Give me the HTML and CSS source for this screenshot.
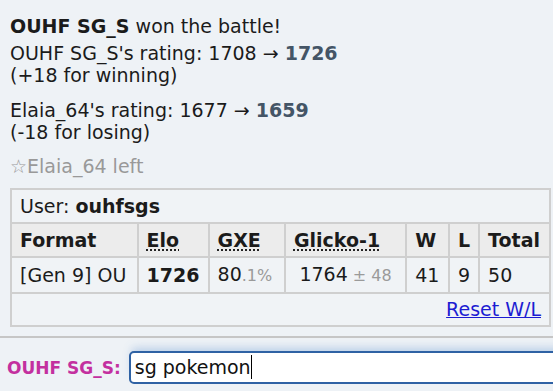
FILE: index.html
```html
<!DOCTYPE html>
<html lang="en">
<head>
  <meta charset="UTF-8">
  <meta name="viewport" content="width=device-width, initial-scale=1.0">
  <title>Battle log</title>
  <link rel="stylesheet" href="styles.css">
</head>
<body>
  <div class="log">
    <div class="win"><strong>OUHF SG_S</strong> won the battle!</div>
    <p class="rating">OUHF SG_S's rating: 1708 &rarr; <strong>1726</strong><br>(+18 for winning)</p>
    <p class="rating">Elaia_64's rating: 1677 &rarr; <strong>1659</strong><br>(-18 for losing)</p>
    <div class="notice">&#9734;Elaia_64 left</div>

    <table class="ladder">
      <tr>
        <td colspan="7" class="user">User: <strong>ouhfsgs</strong></td>
      </tr>
      <tr>
        <th class="col-format">Format</th>
        <th class="col-elo"><abbr>Elo</abbr></th>
        <th class="col-gxe"><abbr>GXE</abbr></th>
        <th class="col-glicko"><abbr>Glicko-1</abbr></th>
        <th class="col-w">W</th>
        <th class="col-l">L</th>
        <th class="col-total">Total</th>
      </tr>
      <tr>
        <td>[Gen 9] OU</td>
        <td><strong>1726</strong></td>
        <td>80<small>.1%</small></td>
        <td class="center">1764<small> &plusmn; 48</small></td>
        <td>41</td>
        <td>9</td>
        <td>50</td>
      </tr>
      <tr>
        <td colspan="7" class="reset"><a href="#">Reset W/L</a></td>
      </tr>
    </table>
  </div>

  <div class="chatbar">
    <span class="chat-name">OUHF SG_S:</span>
    <div class="chat-input">sg pokemon<span class="caret"></span></div>
  </div>
</body>
</html>
```

FILE: styles.css
```css
body {
  margin: 0;
  height: 391px;
  overflow: hidden;
  background-color: #eef2f6;
  font-family: "DejaVu Sans", Verdana, sans-serif;
  font-size: 19px;
  line-height: 22px;
  color: #1b1b1b;
}

.log {
  padding: 15px 0 0 10px;
}

.win {
  margin-bottom: 5px;
}

.rating {
  margin: 0 0 13px;
}

.rating strong {
  color: #445566;
}

.notice {
  color: #999;
  margin-top: -1px;
}

.ladder {
  margin-top: 11px;
  width: 541px;
  border-collapse: collapse;
  border: 2px solid #cfcfcf;
}

.ladder th,
.ladder td {
  border: 2px solid #cfcfcf;
  padding: 5px 8px 5px 8px;
  text-align: left;
  white-space: nowrap;
}

.ladder th {
  background-color: #ececec;
}

.ladder td {
  background-color: #f0f3f6;
}

.ladder .user {
  padding-left: 8px;
}

.ladder abbr {
  text-decoration: underline dotted;
  text-underline-offset: 3px;
}

.ladder small {
  font-size: 16px;
  color: #9a9a9a;
}

.ladder .center {
  text-align: center;
}

.col-format { width: 109px; }
.col-elo { width: 53px; }
.col-gxe { width: 59px; }
.col-glicko { width: 105px; }
.col-w { width: 25px; }
.col-l { width: 11px; }
.col-total { width: 53px; }

.ladder .reset {
  text-align: right;
  padding: 4px 8px 5px;
}

.reset a {
  color: #1c1cd2;
}

.chatbar {
  margin-top: 9px;
  border-top: 2px solid #c6c6c6;
  padding: 13px 0 0 7px;
  display: flex;
  align-items: center;
  gap: 8px;
  overflow: hidden;
}

.chat-name {
  flex: none;
  white-space: nowrap;
  font-size: 17px;
  font-weight: bold;
  color: #c3309f;
}

.chat-input {
  flex: none;
  width: 460px;
  height: 29px;
  line-height: 29px;
  padding-left: 4px;
  background-color: #fff;
  border: 2px solid #2f62a4;
  border-radius: 5px;
  box-shadow: 0 -6px 9px -3px rgba(90, 140, 205, 0.35);
  color: #111;
  white-space: nowrap;
}

.caret {
  display: inline-block;
  width: 0;
  height: 24px;
  border-left: 1px solid #000;
  vertical-align: -5px;
}
```
